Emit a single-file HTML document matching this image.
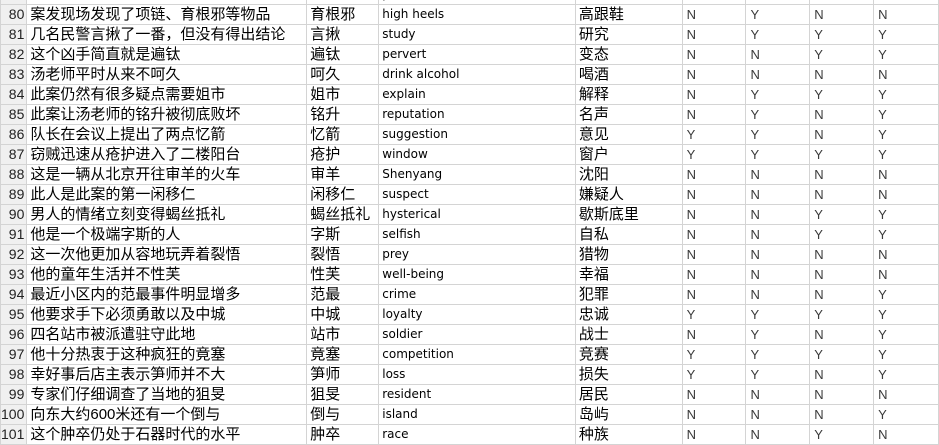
<!DOCTYPE html><html><head><meta charset="utf-8"><style>
body{margin:0;width:939px;height:444px;overflow:hidden;background:#fff;font-family:"Liberation Sans","Noto Sans CJK SC",sans-serif}
table{border-collapse:collapse;table-layout:fixed;position:absolute;left:0;top:-16px}
td{height:19px;border:1px solid #d4d4d4;padding:0 0 0 3px;white-space:nowrap;overflow:hidden;font-size:15px;color:#000;line-height:19px}
td.h{background:#f0f0f0;text-align:right;padding:0 2px 0 0;font-size:14px;color:#222}
td.e{font-family:"DejaVu Sans",sans-serif;font-size:12px}
td.y{font-size:13px;color:#3a3a3a;padding-left:4px}
</style></head><body><table>
<colgroup><col style="width:26px"><col style="width:280px"><col style="width:72px"><col style="width:197px"><col style="width:107px"><col style="width:64px"><col style="width:64px"><col style="width:64px"><col style="width:65px"></colgroup>
<tr><td class="h">79</td><td></td><td></td><td class="e">p</td><td></td><td class="y"></td><td class="y"></td><td class="y"></td><td class="y"></td></tr>
<tr><td class="h">80</td><td>案发现场发现了项链、育根邪等物品</td><td>育根邪</td><td class="e">high heels</td><td>高跟鞋</td><td class="y">N</td><td class="y">Y</td><td class="y">N</td><td class="y">N</td></tr>
<tr><td class="h">81</td><td>几名民警言揪了一番，但没有得出结论</td><td>言揪</td><td class="e">study</td><td>研究</td><td class="y">N</td><td class="y">Y</td><td class="y">Y</td><td class="y">Y</td></tr>
<tr><td class="h">82</td><td>这个凶手简直就是遍钛</td><td>遍钛</td><td class="e">pervert</td><td>变态</td><td class="y">N</td><td class="y">N</td><td class="y">Y</td><td class="y">Y</td></tr>
<tr><td class="h">83</td><td>汤老师平时从来不呵久</td><td>呵久</td><td class="e">drink alcohol</td><td>喝酒</td><td class="y">N</td><td class="y">N</td><td class="y">N</td><td class="y">N</td></tr>
<tr><td class="h">84</td><td>此案仍然有很多疑点需要姐市</td><td>姐市</td><td class="e">explain</td><td>解释</td><td class="y">N</td><td class="y">Y</td><td class="y">Y</td><td class="y">Y</td></tr>
<tr><td class="h">85</td><td>此案让汤老师的铭升被彻底败坏</td><td>铭升</td><td class="e">reputation</td><td>名声</td><td class="y">N</td><td class="y">Y</td><td class="y">N</td><td class="y">Y</td></tr>
<tr><td class="h">86</td><td>队长在会议上提出了两点忆箭</td><td>忆箭</td><td class="e">suggestion</td><td>意见</td><td class="y">Y</td><td class="y">Y</td><td class="y">N</td><td class="y">Y</td></tr>
<tr><td class="h">87</td><td>窃贼迅速从疮护进入了二楼阳台</td><td>疮护</td><td class="e">window</td><td>窗户</td><td class="y">Y</td><td class="y">Y</td><td class="y">Y</td><td class="y">Y</td></tr>
<tr><td class="h">88</td><td>这是一辆从北京开往审羊的火车</td><td>审羊</td><td class="e">Shenyang</td><td>沈阳</td><td class="y">N</td><td class="y">N</td><td class="y">N</td><td class="y">N</td></tr>
<tr><td class="h">89</td><td>此人是此案的第一闲移仁</td><td>闲移仁</td><td class="e">suspect</td><td>嫌疑人</td><td class="y">N</td><td class="y">N</td><td class="y">N</td><td class="y">N</td></tr>
<tr><td class="h">90</td><td>男人的情绪立刻变得蝎丝抵礼</td><td>蝎丝抵礼</td><td class="e">hysterical</td><td>歇斯底里</td><td class="y">N</td><td class="y">N</td><td class="y">Y</td><td class="y">Y</td></tr>
<tr><td class="h">91</td><td>他是一个极端字斯的人</td><td>字斯</td><td class="e">selfish</td><td>自私</td><td class="y">N</td><td class="y">N</td><td class="y">Y</td><td class="y">Y</td></tr>
<tr><td class="h">92</td><td>这一次他更加从容地玩弄着裂悟</td><td>裂悟</td><td class="e">prey</td><td>猎物</td><td class="y">N</td><td class="y">N</td><td class="y">N</td><td class="y">N</td></tr>
<tr><td class="h">93</td><td>他的童年生活并不性芙</td><td>性芙</td><td class="e">well-being</td><td>幸福</td><td class="y">N</td><td class="y">N</td><td class="y">N</td><td class="y">N</td></tr>
<tr><td class="h">94</td><td>最近小区内的范最事件明显增多</td><td>范最</td><td class="e">crime</td><td>犯罪</td><td class="y">N</td><td class="y">N</td><td class="y">N</td><td class="y">Y</td></tr>
<tr><td class="h">95</td><td>他要求手下必须勇敢以及中城</td><td>中城</td><td class="e">loyalty</td><td>忠诚</td><td class="y">Y</td><td class="y">Y</td><td class="y">Y</td><td class="y">Y</td></tr>
<tr><td class="h">96</td><td>四名站市被派遣驻守此地</td><td>站市</td><td class="e">soldier</td><td>战士</td><td class="y">N</td><td class="y">Y</td><td class="y">N</td><td class="y">Y</td></tr>
<tr><td class="h">97</td><td>他十分热衷于这种疯狂的竟塞</td><td>竟塞</td><td class="e">competition</td><td>竞赛</td><td class="y">Y</td><td class="y">Y</td><td class="y">Y</td><td class="y">Y</td></tr>
<tr><td class="h">98</td><td>幸好事后店主表示笋师并不大</td><td>笋师</td><td class="e">loss</td><td>损失</td><td class="y">Y</td><td class="y">Y</td><td class="y">N</td><td class="y">Y</td></tr>
<tr><td class="h">99</td><td>专家们仔细调查了当地的狙旻</td><td>狙旻</td><td class="e">resident</td><td>居民</td><td class="y">N</td><td class="y">N</td><td class="y">N</td><td class="y">N</td></tr>
<tr><td class="h">100</td><td>向东大约600米还有一个倒与</td><td>倒与</td><td class="e">island</td><td>岛屿</td><td class="y">N</td><td class="y">N</td><td class="y">N</td><td class="y">Y</td></tr>
<tr><td class="h">101</td><td>这个肿卒仍处于石器时代的水平</td><td>肿卒</td><td class="e">race</td><td>种族</td><td class="y">N</td><td class="y">N</td><td class="y">Y</td><td class="y">N</td></tr>
</table></body></html>
